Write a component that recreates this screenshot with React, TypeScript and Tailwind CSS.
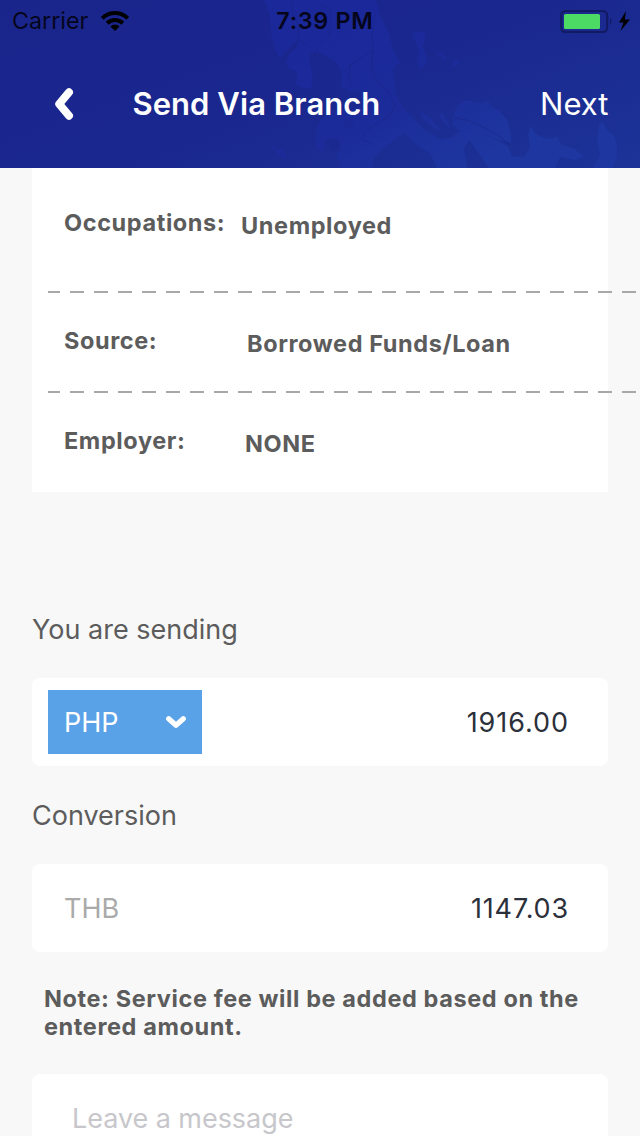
type DetailProps = { label: string; value: string; rowClass: string; gapClass: string };

function Detail({ label, value, rowClass, gapClass }: DetailProps) {
  return (
    <div className={`flex items-start pl-8 text-[23.5px] leading-[30px] font-[650] tracking-[0.6px] text-[#5c5c5c] ${rowClass}`}>
      <span className={`shrink-0 whitespace-nowrap ${gapClass}`}>{label}</span>
      <span className="mt-[3px] whitespace-nowrap">{value}</span>
    </div>
  );
}

function DashedLine() {
  return (
    <div className="ml-4 h-0.5 w-[592px] bg-[repeating-linear-gradient(90deg,#a8a8a8_0px,#a8a8a8_12px,transparent_12px,transparent_22px,#a8a8a8_22px,#a8a8a8_24px)]" />
  );
}

function MapBackdrop() {
  return (
    <svg className="absolute inset-0 h-full w-full" viewBox="0 0 640 168" aria-hidden="true">
      <defs>
        <linearGradient id="land" gradientUnits="userSpaceOnUse" x1="380" y1="0" x2="470" y2="168">
          <stop offset="0" stopColor="#1c299c" />
          <stop offset="0.5" stopColor="#1c2c9b" />
          <stop offset="1" stopColor="#1f37a2" />
        </linearGradient>
      </defs>
      <g fill="url(#land)" opacity="0.9">
        <path d="M264 0L270 15 271 35 275 49 280 58 288 49 293 44 299 40 296 48 289 54 286 63 290 69 297 72 296 84 304 89 311 88 313 76 309 61 311 52 323 54 337 63 342 74 340 86 350 92 360 91 362 105 350 111 335 110 326 115 318 124 315 139 317 150 325 151 324 141 332 137 340 144 337 155 341 168 372 168 375 156 384 148 396 138 405 134 415 144 430 153 437 168 467 168 464 148 471 137 484 134 499 140 511 143 511 133 508 121 500 111 491 106 488 100 482 103 475 102 467 100 459 104 454 112 452 125 460 131 450 138 439 139 423 128 412 117 402 106 396 95 393 69 400 62 393 50 389 33 380 15 376 0Z" />
        <path d="M411 33L423 31 426 36 423 47 427 58 425 67 419 69 417 61 420 54 416 43Z" />
        <path d="M435 51L440 52 447 58 443 59ZM451 65L456 60 460 63 457 66Z" />
        <path d="M419 110L430 118 441 130 447 134 434 128 423 119ZM439 116L442 112 448 122 451 129 445 124Z" />
        <path d="M468 138L483 134 495 139 508 146 512 157 524 157 530 147 528 134 531 126 536 134 546 139 557 137 562 145 573 148 584 156 576 160 560 157 555 168 489 168 480 155Z" />
        <path d="M597 138L599 125 603 122 607 130 614 136 617 145 617 157 613 168 593 168 600 155Z" />
        <path d="M271 145L284 151 287 158 277 155Z" />
      </g>
      <path d="M326 140L338 138 341 148 333 152ZM343 121L352 119 353 126 346 128Z" fill="#1a278f" opacity="0.5" />
      <g fill="none" stroke="#1a2587" strokeWidth="1" opacity="0.6">
        <path d="M291 0L293 14 298 25 299 40 311 47M299 40L292 50M317 0L324 8 330 7 331 19 329 35 317 49 313 59M342 73L353 63 364 56 373 50 372 35 376 12M350 63L349 82 354 88M373 50L371 68 378 82 388 91 395 104 391 115 382 120 366 131 362 139 372 144M454 118L467 120 481 126 496 134 510 145" />
      </g>
    </svg>
  );
}

function Header() {
  return (
    <header className="relative h-[168px] shrink-0 overflow-hidden bg-[linear-gradient(160deg,#1a258c_0%,#1a278e_50%,#1c3398_100%)]">
      <MapBackdrop />
      <div className="relative flex h-full flex-col">
        <div className="grid h-[41px] grid-cols-3 items-center text-[23.3px] leading-[28px] text-[#05061c]">
          <div className="flex items-center pl-3">
            <span>Carrier</span>
            <svg className="ml-[12px] h-5 w-[30px]" viewBox="0 0 30 20" aria-hidden="true">
              <g fill="none" stroke="#000" strokeWidth="4">
                <path d="M2.3 7.3A18 18 0 0 1 27.7 7.3" />
                <path d="M7.2 12.2A11.2 11.2 0 0 1 22.8 12.2" />
              </g>
              <path d="M10.4 15.4A6.5 6.5 0 0 1 19.6 15.4L15 20Z" />
            </svg>
          </div>
          <div className="pl-[63px] font-semibold tracking-[0.7px] whitespace-nowrap">7:39 PM</div>
          <svg className="h-6 w-[88px] justify-self-end" viewBox="560 8 88 24" aria-hidden="true">
            <rect x="569.2" y="10" width="46" height="21" rx="4.5" fill="none" stroke="#121a62" strokeWidth="2" />
            <rect x="572" y="13" width="36" height="15" rx="1.5" fill="#4cd964" />
            <path d="M618 17Q621 20.5 618 24Z" fill="#121a62" />
            <path d="M634 10L627 21.5 631.5 21.5 628.5 30 638 18.5 632.8 18.5Z" fill="#000" />
          </svg>
        </div>
        <div className="flex h-[126px] items-center text-[31px] leading-[40px] text-white">
          <svg className="ml-[54px] h-8 w-5" viewBox="0 0 20 32" aria-label="Back">
            <path d="M15 4.3L5.2 16 15 27.7" fill="none" stroke="white" strokeWidth="8" strokeLinecap="round" strokeLinejoin="round" />
          </svg>
          <h1 className="ml-[58.5px] font-semibold tracking-[0.05px] whitespace-nowrap">Send Via Branch</h1>
          <button className="mr-[31.5px] ml-auto">Next</button>
        </div>
      </div>
    </header>
  );
}

export default function App() {
  return (
    <div className="flex h-[1136px] w-[640px] flex-col overflow-hidden bg-[#f8f8f8] font-['Inter',sans-serif]">
      <Header />
      <main className="flex min-h-0 flex-1 flex-col px-8 text-[27px] text-[#5c5c5c]">
        <section className="h-[324px] shrink-0 bg-white">
          <Detail label="Occupations:" value="Unemployed" rowClass="h-[123px] pt-[40px]" gapClass="w-[177px]" />
          <DashedLine />
          <Detail label="Source:" value="Borrowed Funds/Loan" rowClass="h-[98px] pt-[33px]" gapClass="w-[183px]" />
          <DashedLine />
          <Detail label="Employer:" value="NONE" rowClass="h-[98px] pt-[33px]" gapClass="w-[181px]" />
        </section>

        <h2 className="mt-[121px] h-[65px] shrink-0 leading-[34px]">You are sending</h2>
        <div className="flex h-[88px] shrink-0 items-center justify-between rounded-lg bg-white pr-[39px] pl-4">
          <button className="flex h-16 w-[154px] items-center justify-between bg-[#5aa2e7] pr-[15px] pl-4 text-white">
            <span className="pt-0.5">PHP</span>
            <svg className="h-[14px] w-[22px]" viewBox="0 0 22 14" aria-hidden="true">
              <path d="M3.7 3.7L11 10.2 18.3 3.7" fill="none" stroke="white" strokeWidth="5.2" strokeLinecap="round" strokeLinejoin="round" />
            </svg>
          </button>
          <span className="pt-0.5 tracking-[0.95px] text-[#2b303b]">1916.00</span>
        </div>

        <h2 className="mt-[33px] h-[65px] shrink-0 leading-[34px]">Conversion</h2>
        <div className="flex h-[88px] shrink-0 items-center justify-between rounded-lg bg-white pr-[39px] pl-8">
          <span className="pt-0.5 text-[#aaaaaa]">THB</span>
          <span className="pt-0.5 tracking-[0.85px] text-[#2b303b]">1147.03</span>
        </div>

        <p className="mt-[33px] h-[89px] shrink-0 pl-3 text-[23.5px] leading-[28px] font-[650] tracking-[0.6px] whitespace-nowrap">
          Note: Service fee will be added based on the
          <br />
          entered amount.
        </p>
        <div className="h-[88px] shrink-0 rounded-lg bg-white pt-[28px] pl-[40px] leading-[34px] tracking-[-0.05px] text-[#c7c7cb]">Leave a message</div>
      </main>
    </div>
  );
}
